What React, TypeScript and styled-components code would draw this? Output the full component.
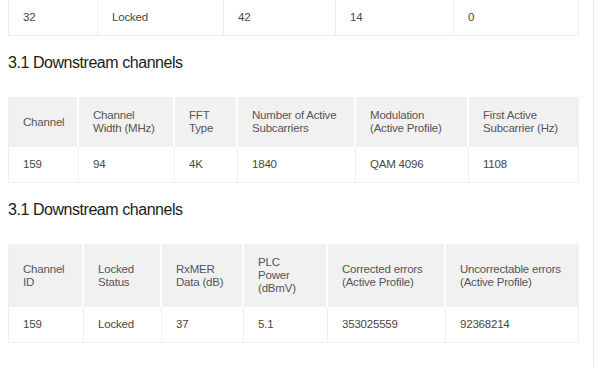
import React from "react";
import styled, { createGlobalStyle } from "styled-components";

const upstreamRow = ["32", "Locked", "42", "14", "0"];
const upstreamCols = [89, 126, 112, 118, 125];

// header labels are split the way the router page wraps them
const ofdmTable = {
  title: "3.1 Downstream channels",
  cols: [70, 96, 63, 118, 113, 110],
  head: [
    ["Channel"],
    ["Channel", "Width (MHz)"],
    ["FFT", "Type"],
    ["Number of Active", "Subcarriers"],
    ["Modulation", "(Active Profile)"],
    ["First Active", "Subcarrier (Hz)"],
  ],
  row: ["159", "94", "4K", "1840", "QAM 4096", "1108"],
};

const errorTable = {
  title: "3.1 Downstream channels",
  cols: [75, 78, 82, 84, 118, 133],
  head: [
    ["Channel", "ID"],
    ["Locked", "Status"],
    ["RxMER", "Data (dB)"],
    ["PLC", "Power", "(dBmV)"],
    ["Corrected errors", "(Active Profile)"],
    ["Uncorrectable errors", "(Active Profile)"],
  ],
  row: ["159", "Locked", "37", "5.1", "353025559", "92368214"],
};

const App = () => {
  return (
    <>
      <GlobalStyle />
      <Page>
        <Table>
          <colgroup>
            {upstreamCols.map((w, i) => (
              <Col key={i} $w={w} />
            ))}
          </colgroup>
          <tbody>
            <tr>
              {upstreamRow.map((v, i) => (
                <Td key={i}>{v}</Td>
              ))}
            </tr>
          </tbody>
        </Table>

        {[ofdmTable, errorTable].map((t, idx) => (
          <section key={idx}>
            <Title>{t.title}</Title>
            <Table>
              <colgroup>
                {t.cols.map((w, i) => (
                  <Col key={i} $w={w} />
                ))}
              </colgroup>
              <thead>
                <tr>
                  {t.head.map((lines, i) => (
                    <Th key={i}>
                      {lines.map((l, j) => (
                        <Line key={j}>{l}</Line>
                      ))}
                    </Th>
                  ))}
                </tr>
              </thead>
              <tbody>
                <tr>
                  {t.row.map((v, i) => (
                    <Td key={i}>{v}</Td>
                  ))}
                </tr>
              </tbody>
            </Table>
          </section>
        ))}
      </Page>
    </>
  );
};

const GlobalStyle = createGlobalStyle`
  body {
    margin: 0;
    background: #ffffff;
    font-family: "Liberation Sans", Arial, sans-serif;
  }
`;

const Page = styled.main`
  box-sizing: border-box;
  width: 594px;
  min-height: 100vh;
  padding: 0 15px 0 8px;
  border-right: 1px solid #ececec;
`;

const Title = styled.h2`
  margin: 17px 0 24px;
  font-size: 16px;
  line-height: 20px;
  font-weight: 400;
  letter-spacing: -0.45px;
  color: #1c1c1c;
`;

const Table = styled.table`
  width: 570px;
  table-layout: fixed;
  border-collapse: separate;
  border-spacing: 0;
  border-left: 1px solid #eeeeee;
  border-bottom: 1px solid #eeeeee;
`;

const Col = styled.col<{ $w: number }>`
  width: ${(p) => p.$w}px;
`;

const Th = styled.th`
  padding: 12px 4px 12px 14px;
  background: #f1f1f1;
  border-right: 2px solid #ffffff;
  text-align: left;
  font-weight: 400;
  font-size: 11.5px;
  line-height: 13px;
  letter-spacing: -0.2px;
  color: #555555;
  white-space: nowrap;
  &:last-child {
    border-right: 1px solid #f1f1f1;
  }
`;

const Line = styled.span`
  display: block;
`;

const Td = styled.td`
  padding: 11px 4px 11px 14px;
  border-right: 1px solid #eeeeee;
  font-size: 11.5px;
  line-height: 13px;
  letter-spacing: -0.2px;
  color: #474747;
`;

export default App;
